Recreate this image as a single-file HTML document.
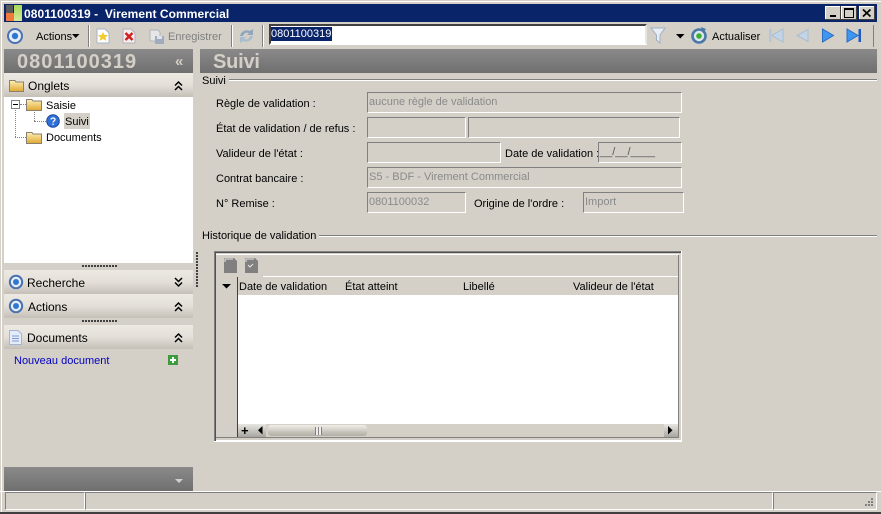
<!DOCTYPE html>
<html><head><meta charset="utf-8">
<style>
html,body{margin:0;padding:0}
body{width:881px;height:514px;overflow:hidden;position:relative;background:#d4d0c8;font-family:"Liberation Sans",sans-serif;font-size:11px;color:#000}
.a{position:absolute}
.t{position:absolute;white-space:nowrap;line-height:16px;margin-top:1px}
.f{position:absolute;box-sizing:border-box;border:1px solid;border-color:#808080 #fff #fff #808080;color:#8a8a8a;padding:2px 0 0 1px;line-height:15px;white-space:nowrap;overflow:hidden}
.h{position:absolute;left:4px;width:189px;height:24px;background:linear-gradient(#ece9e2,#e4e0d9 50%,#c4c0b8)}
.g{position:absolute;background:linear-gradient(#8a8a8a,#6f6f6f)}
svg{position:absolute;overflow:visible}
</style></head><body>
<svg width="0" height="0" style="left:0;top:0"><defs><linearGradient id="fo" x1="0" y1="0" x2="0" y2="1"><stop offset="0" stop-color="#fdf0b8"/><stop offset="1" stop-color="#e0a830"/></linearGradient></defs></svg>
<!-- window frame -->
<div class="a" style="left:1px;top:1px;width:880px;height:1px;background:#fff"></div>
<div class="a" style="left:1px;top:1px;width:1px;height:511px;background:#fff"></div>
<div class="a" style="left:0;top:512px;width:881px;height:2px;background:#404040"></div>

<!-- title bar -->
<div class="a" style="left:4px;top:4px;width:873px;height:18px;background:#0a246a"></div>
<div class="a" style="left:6px;top:5px;width:7px;height:8px;background:#5a5a5a"></div>
<div class="a" style="left:6px;top:13px;width:8px;height:8px;background:#f07a3c"></div>
<div class="a" style="left:14px;top:5px;width:8px;height:16px;background:linear-gradient(#a8d85a,#d8e89a)"></div>
<div class="t" style="left:24px;top:5px;color:#fff;font-weight:bold;font-size:12px;letter-spacing:.06px">0801100319 -&nbsp; Virement Commercial</div>
<div class="a" style="left:825px;top:6px;width:16px;height:14px;background:#d4d0c8;box-shadow:inset -1px -1px #404040,inset 1px 1px #fff"></div>
<div class="a" style="left:830px;top:15px;width:6px;height:2px;background:#000"></div>
<div class="a" style="left:841px;top:6px;width:16px;height:14px;background:#d4d0c8;box-shadow:inset -1px -1px #404040,inset 1px 1px #fff"></div>
<div class="a" style="left:844px;top:8px;width:8px;height:7px;border:1px solid #000;border-top-width:2px"></div>
<div class="a" style="left:859px;top:6px;width:16px;height:14px;background:#d4d0c8;box-shadow:inset -1px -1px #404040,inset 1px 1px #fff"></div>
<svg style="left:859px;top:6px" width="16" height="14"><path d="M4 3.5L11.5 10.5M11.5 3.5L4 10.5" stroke="#000" stroke-width="1.7" fill="none"/></svg>

<!-- toolbar -->
<svg style="left:6px;top:27px" width="18" height="18"><circle cx="9" cy="9" r="7" fill="#e8eef8" stroke="#4a72b0" stroke-width="2"/><circle cx="9" cy="9" r="3.2" fill="#2f78d0"/></svg>
<div class="t" style="left:36px;top:28px">Actions</div>
<svg style="left:72px;top:34px" width="8" height="5"><path d="M0 0H7.5L3.75 4z" fill="#000"/></svg>
<div class="a" style="left:88px;top:25px;width:1px;height:22px;background:#808080;box-shadow:1px 0 #fff"></div>
<svg style="left:96px;top:28px" width="14" height="16"><path d="M1 1H9L13 5V15H1z" fill="#fff" stroke="#a8b4c8"/><path d="M7 4l1.5 3H12L9.5 9.5 10.5 13 7 11 3.5 13 4.5 9.5 2 7H5.5z" fill="#f2cc30"/></svg>
<svg style="left:122px;top:28px" width="14" height="16"><path d="M1 1H9L13 5V15H1z" fill="#f4eeee" stroke="#b4b0c0"/><path d="M3.5 5L10.5 12M10.5 5L3.5 12" stroke="#d02020" stroke-width="2.4"/></svg>
<svg style="left:149px;top:29px" width="16" height="16"><path d="M1 1H9L11 3V12H1z" fill="#e6e6e6" stroke="#b0b4bc"/><rect x="6" y="7" width="9" height="8" fill="#a0acbe"/><rect x="8" y="7" width="5" height="3" fill="#e0e4ea"/></svg>
<div class="t" style="left:168px;top:28px;color:#808080">Enregistrer</div>
<div class="a" style="left:231px;top:25px;width:1px;height:22px;background:#808080;box-shadow:1px 0 #fff"></div>
<svg style="left:238px;top:27px" width="17" height="18"><path d="M2 9C3 4 8 2 12 4L15 2V8H9L11 6C8 5 6 6 5 9z" fill="#8fa6bc"/><path d="M15 9C14 14 9 16 5 14L2 16V10H8L6 12C9 13 11 12 12 9z" fill="#a9bdce"/></svg>
<div class="a" style="left:262px;top:25px;width:1px;height:22px;background:#808080;box-shadow:1px 0 #fff"></div>
<div class="a" style="box-sizing:border-box;left:269px;top:24px;width:378px;height:21px;background:#fff;border:2px solid;border-color:#404040 #e8e6e0 #fff #404040"></div>
<div class="a" style="left:271px;top:27px;width:61px;height:14px;background:#0a246a"></div>
<div class="t" style="left:271px;top:25px;color:#fff">0801100319</div>
<svg style="left:650px;top:27px" width="16" height="17"><path d="M1 1H15L10 8V16L6.5 13V8z" fill="#e8eef4" stroke="#9eb0c4"/></svg>
<svg style="left:676px;top:34px" width="9" height="6"><path d="M0 0H8.5L4.25 4.5z" fill="#000"/></svg>
<svg style="left:690px;top:27px" width="18" height="18"><circle cx="9" cy="9" r="6.5" fill="#dfe6ee" stroke="#4a78a8" stroke-width="2.6"/><circle cx="9" cy="9" r="2.8" fill="#38b030"/><path d="M11 0l5 2-3 4z" fill="#4a78a8"/></svg>
<div class="t" style="left:712px;top:28px">Actualiser</div>
<svg style="left:768px;top:28px" width="16" height="15"><path d="M15 1V14L4 7.5z" fill="#c4d4e8" stroke="#a8bcd0"/><rect x="1" y="1" width="2.5" height="13" fill="#b4c6da"/></svg>
<svg style="left:795px;top:28px" width="14" height="15"><path d="M13 1.5V13.5L2 7.5z" fill="#c4d4e8" stroke="#a8bcd0"/></svg>
<svg style="left:821px;top:28px" width="14" height="15"><path d="M1.5 1V14L12.5 7.5z" fill="#3f96f0" stroke="#2a6cc0"/></svg>
<svg style="left:846px;top:28px" width="16" height="15"><path d="M1 1V14L12 7.5z" fill="#3f96f0" stroke="#2a6cc0"/><rect x="12.5" y="1" width="2.5" height="13" fill="#1f5cc0"/></svg>
<div class="a" style="left:873px;top:25px;width:1px;height:22px;background:#808080"></div>

<!-- gray headers -->
<div class="g" style="left:4px;top:49px;width:189px;height:24px"></div>
<div class="t" style="left:17px;top:49px;color:#d4d0c8;font-weight:bold;font-size:20px;line-height:24px;letter-spacing:1px">0801100319</div>
<div class="t" style="left:175px;top:52px;color:#d4d0c8;font-size:15px;line-height:18px;font-weight:bold">«</div>
<div class="g" style="left:200px;top:49px;width:677px;height:24px"></div>
<div class="t" style="left:213px;top:49px;color:#d4d0c8;font-weight:bold;font-size:20px;line-height:24px;letter-spacing:-.2px">Suivi</div>

<!-- Onglets -->
<div class="h" style="top:73px"></div>
<svg style="left:9px;top:79px" width="15" height="13"><path d="M.5 12.5V1.5H6L7 3H14.5V12.5z" fill="url(#fo)" stroke="#8a8070"/></svg>
<div class="t" style="left:28px;top:77px;font-size:12px;line-height:16px">Onglets</div>
<svg style="left:174px;top:81px" width="9" height="10"><path d="M1 4.5L4.5 1 8 4.5M1 9L4.5 5.5 8 9" fill="none" stroke="#000" stroke-width="1.5"/></svg>
<div class="a" style="left:4px;top:97px;width:189px;height:166px;background:#fff"></div>
<!-- tree -->
<div class="a" style="left:11px;top:100px;width:7px;height:7px;border:1px solid #808080;background:#fff"></div>
<div class="a" style="left:13px;top:104px;width:5px;height:1px;background:#000"></div>
<div class="a" style="left:15px;top:110px;height:27px;border-left:1px dotted #808080"></div>
<div class="a" style="left:15px;top:137px;width:11px;border-top:1px dotted #808080"></div>
<div class="a" style="left:20px;top:104px;width:6px;border-top:1px dotted #808080"></div>
<div class="a" style="left:34px;top:112px;height:9px;border-left:1px dotted #808080"></div>
<div class="a" style="left:34px;top:121px;width:12px;border-top:1px dotted #808080"></div>
<svg style="left:26px;top:98px" width="16" height="13"><path d="M.5 12.5V1.5H6L7 3H15.5V12.5z" fill="url(#fo)" stroke="#8a8070"/></svg>
<div class="t" style="left:46px;top:97px;font-size:11px">Saisie</div>
<svg style="left:46px;top:114px" width="14" height="14"><circle cx="7" cy="7" r="6.3" fill="#2f6fd8" stroke="#1f4a9c"/><path d="M5 5.5C5 3.5 9 3.5 9 5.5 9 7 7 7 7 8.5" fill="none" stroke="#fff" stroke-width="1.3"/><rect x="6.4" y="9.6" width="1.3" height="1.4" fill="#fff"/></svg>
<div class="a" style="left:64px;top:113px;width:26px;height:16px;background:#d4d0c8"></div>
<div class="t" style="left:65px;top:113px;font-size:11px">Suivi</div>
<svg style="left:26px;top:131px" width="16" height="13"><path d="M.5 12.5V1.5H6L7 3H15.5V12.5z" fill="url(#fo)" stroke="#8a8070"/></svg>
<div class="t" style="left:46px;top:129px;font-size:11px">Documents</div>

<!-- splitters -->
<div class="a" style="left:82px;top:265px;width:35px;height:2px;background:repeating-linear-gradient(90deg,#404040 0 2px,transparent 2px 3px)"></div>
<div class="a" style="left:82px;top:320px;width:35px;height:2px;background:repeating-linear-gradient(90deg,#404040 0 2px,transparent 2px 3px)"></div>
<div class="a" style="left:196px;top:252px;width:2px;height:36px;background:repeating-linear-gradient(#404040 0 2px,transparent 2px 3px)"></div>

<!-- Recherche -->
<div class="h" style="top:270px"></div>
<svg style="left:8px;top:274px" width="16" height="16"><circle cx="8" cy="8" r="6.2" fill="#e8eef8" stroke="#4a72b0" stroke-width="2"/><circle cx="8" cy="8" r="3" fill="#2f78d0"/></svg>
<div class="t" style="left:27px;top:274px;font-size:12px;line-height:16px">Recherche</div>
<svg style="left:174px;top:277px" width="9" height="10"><path d="M1 1L4.5 4.5 8 1M1 5.5L4.5 9 8 5.5" fill="none" stroke="#000" stroke-width="1.5"/></svg>
<!-- Actions -->
<div class="h" style="top:294px"></div>
<svg style="left:8px;top:298px" width="16" height="16"><circle cx="8" cy="8" r="6.2" fill="#e8eef8" stroke="#4a72b0" stroke-width="2"/><circle cx="8" cy="8" r="3" fill="#2f78d0"/></svg>
<div class="t" style="left:28px;top:298px;font-size:12px;line-height:16px">Actions</div>
<svg style="left:174px;top:302px" width="9" height="10"><path d="M1 4.5L4.5 1 8 4.5M1 9L4.5 5.5 8 9" fill="none" stroke="#000" stroke-width="1.5"/></svg>
<!-- Documents -->
<div class="h" style="top:325px"></div>
<svg style="left:9px;top:330px" width="13" height="15"><path d="M.5.5H9L12.5 4V14.5H.5z" fill="#e4ecfa" stroke="#a4b4d4"/><path d="M3 6H10M3 8.5H10M3 11H10" stroke="#7c98d0"/></svg>
<div class="t" style="left:27px;top:329px;font-size:12px;line-height:16px">Documents</div>
<svg style="left:174px;top:333px" width="9" height="10"><path d="M1 4.5L4.5 1 8 4.5M1 9L4.5 5.5 8 9" fill="none" stroke="#000" stroke-width="1.5"/></svg>
<div class="t" style="left:14px;top:352px;color:#0000c0">Nouveau document</div>
<svg style="left:168px;top:355px" width="10" height="10"><rect width="10" height="10" fill="#3c9c3c"/><path d="M5 2V8M2 5H8" stroke="#fff" stroke-width="2"/></svg>

<!-- bottom-left bar -->
<div class="g" style="left:4px;top:467px;width:189px;height:24px"></div>
<svg style="left:175px;top:479px" width="9" height="5"><path d="M0 0H8L4 4z" fill="#d4d0c8"/></svg>

<!-- status bar -->
<div class="a" style="left:0;top:491px;width:881px;height:1px;background:#fff"></div>
<div class="a" style="box-sizing:border-box;left:5px;top:492px;width:80px;height:18px;border:1px solid;border-color:#808080 #fff #fff #808080"></div>
<div class="a" style="box-sizing:border-box;left:85px;top:492px;width:688px;height:18px;border:1px solid;border-color:#808080 #fff #fff #808080"></div>
<div class="a" style="box-sizing:border-box;left:773px;top:492px;width:104px;height:18px;border:1px solid;border-color:#808080 #fff #fff #808080"></div>
<svg style="left:862px;top:497px" width="12" height="12"><path d="M9 1h2v2H9zM6 4h2v2H6zM9 4h2v2H9zM3 7h2v2H3zM6 7h2v2H6zM9 7h2v2H9z" fill="#808080"/></svg>

<!-- Suivi section -->
<div class="t" style="left:202px;top:72px">Suivi</div>
<div class="a" style="left:229px;top:79px;width:648px;height:1px;background:#808080;box-shadow:0 1px #fff"></div>
<div class="t" style="left:216px;top:95px">Règle de validation :</div>
<div class="f" style="left:367px;top:92px;width:315px;height:21px">aucune règle de validation</div>
<div class="t" style="left:216px;top:120px">État de validation / de refus :</div>
<div class="f" style="left:367px;top:117px;width:99px;height:21px"></div>
<div class="f" style="left:468px;top:117px;width:212px;height:21px"></div>
<div class="t" style="left:216px;top:145px">Valideur de l'état :</div>
<div class="f" style="left:367px;top:142px;width:134px;height:21px"></div>
<div class="t" style="left:505px;top:145px">Date de validation :</div>
<div class="f" style="left:598px;top:142px;width:84px;height:21px;color:#555">__/__/____</div>
<div class="t" style="left:216px;top:170px">Contrat bancaire :</div>
<div class="f" style="left:367px;top:167px;width:315px;height:21px">S5 - BDF - Virement Commercial</div>
<div class="t" style="left:216px;top:195px">N° Remise :</div>
<div class="f" style="left:367px;top:192px;width:99px;height:21px">0801100032</div>
<div class="t" style="left:474px;top:195px">Origine de l'ordre :</div>
<div class="f" style="left:583px;top:192px;width:101px;height:21px">Import</div>

<!-- Historique -->
<div class="t" style="left:202px;top:227px">Historique de validation</div>
<div class="a" style="left:319px;top:235px;width:558px;height:1px;background:#808080;box-shadow:0 1px #fff"></div>
<!-- grid frame -->
<div class="a" style="left:214px;top:251px;width:468px;height:1px;background:#808080"></div>
<div class="a" style="left:214px;top:251px;width:1px;height:191px;background:#808080"></div>
<div class="a" style="left:215px;top:252px;width:466px;height:1px;background:#505050"></div>
<div class="a" style="left:215px;top:252px;width:1px;height:189px;background:#505050"></div>
<div class="a" style="left:214px;top:441px;width:468px;height:1px;background:#fff"></div>
<div class="a" style="left:681px;top:251px;width:1px;height:191px;background:#fff"></div>
<div class="a" style="left:216px;top:254px;width:463px;height:1px;background:#fff"></div>
<div class="a" style="left:216px;top:440px;width:465px;height:1px;background:#fff"></div>
<div class="a" style="left:216px;top:437px;width:463px;height:1px;background:#808080"></div>
<div class="a" style="left:678px;top:255px;width:1px;height:183px;background:#808080"></div>
<svg style="left:224px;top:258px" width="13" height="15"><path d="M0 0H10L13 3V15H0z" fill="#808080"/><path d="M1 4V1H9" stroke="#e8e8e8" fill="none"/></svg>
<svg style="left:245px;top:258px" width="13" height="15"><path d="M0 0H10L13 3V15H0z" fill="#808080"/><path d="M1 4V1H9M3 7l2 2 3-3" stroke="#e8e8e8" fill="none"/></svg>
<div class="a" style="left:263px;top:276px;width:415px;height:1px;background:#fff"></div>
<!-- grid header -->
<svg style="left:222px;top:284px" width="9" height="5"><path d="M0 0H9L4.5 4.5z" fill="#000"/></svg>
<div class="a" style="left:237px;top:277px;width:1px;height:160px;background:#404040"></div>
<div class="t" style="left:239px;top:278px">Date de validation</div>
<div class="t" style="left:345px;top:278px">État atteint</div>
<div class="t" style="left:463px;top:278px">Libellé</div>
<div class="t" style="left:573px;top:278px">Valideur de l'état</div>
<div class="a" style="left:238px;top:295px;width:440px;height:129px;background:#fff"></div>
<!-- scrollbar row -->
<div class="a" style="left:238px;top:424px;width:15px;height:13px;background:linear-gradient(#e8e6e0,#a8a6a0)"></div>
<div class="t" style="left:241px;top:422px;font-size:13px;font-weight:bold;line-height:15px">+</div>
<div class="a" style="left:253px;top:424px;width:13px;height:13px;background:linear-gradient(#e8e6e0,#a8a6a0)"></div>
<svg style="left:258px;top:426px" width="5" height="9"><path d="M4.5 0V8.5L0 4.25z" fill="#000"/></svg>
<div class="a" style="left:268px;top:425px;width:99px;height:11px;border-radius:3px;background:linear-gradient(#f0eee8,#c8c6bc 60%,#b0aea6)"></div>
<div class="a" style="left:315px;top:427px;width:7px;height:8px;background:repeating-linear-gradient(90deg,#808080 0 1px,#eee 1px 3px)"></div>
<div class="a" style="left:664px;top:424px;width:14px;height:13px;background:linear-gradient(#e8e6e0,#a8a6a0)"></div>
<svg style="left:668px;top:426px" width="5" height="9"><path d="M0 0V8.5L4.5 4.25z" fill="#000"/></svg>
</body></html>
